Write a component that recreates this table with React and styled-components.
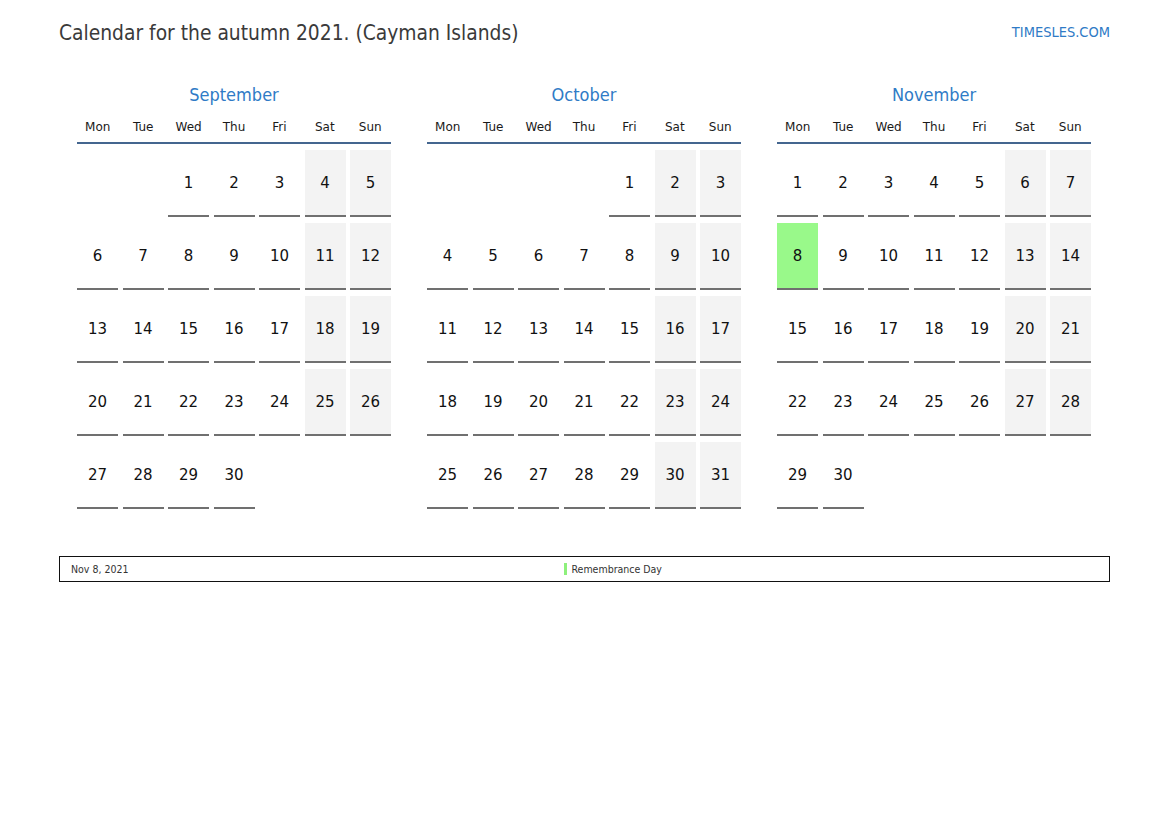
import React from 'react';
import styled, { createGlobalStyle } from 'styled-components';

const GlobalStyle = createGlobalStyle`
  html, body {
    margin: 0;
    padding: 0;
    background: #fff;
  }
  body {
    font-family: "DejaVu Sans", "Liberation Sans", sans-serif;
  }
`;

const condensed = `"DejaVu Sans Condensed", "DejaVu Sans", sans-serif`;

const months = [
  { name: 'September', offset: 2, days: 30 },
  { name: 'October', offset: 4, days: 31 },
  { name: 'November', offset: 0, days: 30, holidays: [8] },
];

const dayNames = ['Mon', 'Tue', 'Wed', 'Thu', 'Fri', 'Sat', 'Sun'];

export default function App() {
  return (
    <>
      <GlobalStyle />
      <Page>
        <Header>
          <Title>Calendar for the autumn 2021. (Cayman Islands)</Title>
          <Brand>TIMESLES.COM</Brand>
        </Header>

        <Months>
          {months.map((m) => (
            <Month key={m.name}>
              <MonthName>{m.name}</MonthName>
              <DayNames>
                {dayNames.map((d) => (
                  <DayName key={d}>{d}</DayName>
                ))}
              </DayNames>
              <Grid>
                {Array.from({ length: m.offset }).map((_, i) => (
                  <Empty key={'e' + i} />
                ))}
                {Array.from({ length: m.days }).map((_, i) => {
                  const day = i + 1;
                  const col = (m.offset + i) % 7;
                  const holiday = m.holidays && m.holidays.includes(day);
                  return (
                    <Day key={day} $weekend={col >= 5} $holiday={holiday}>
                      {day}
                    </Day>
                  );
                })}
              </Grid>
            </Month>
          ))}
        </Months>

        <Legend>
          <LegendDate>Nov 8, 2021</LegendDate>
          <LegendName>
            <Marker />
            Remembrance Day
          </LegendName>
        </Legend>
      </Page>
    </>
  );
}

const Page = styled.div`
  width: 1169px;
  height: 827px;
  box-sizing: border-box;
  padding: 20px 59px 0;
`;

const Header = styled.div`
  display: flex;
  justify-content: space-between;
  align-items: center;
  height: 26px;
`;

const Title = styled.div`
  font-family: ${condensed};
  font-size: 20.8px;
  color: #3a3a3a;
  line-height: 26px;
`;

const Brand = styled.div`
  font-family: ${condensed};
  font-size: 14.5px;
  color: #2f7bc6;
  line-height: 26px;
  margin-top: -2px;
`;

const Months = styled.div`
  display: grid;
  grid-template-columns: repeat(3, 1fr);
  column-gap: 36px;
  padding: 0 19px 0 18px;
  margin-top: 36px;
`;

const Month = styled.div`
  display: flex;
  flex-direction: column;
`;

const MonthName = styled.div`
  font-family: ${condensed};
  text-align: center;
  font-size: 18px;
  line-height: 26px;
  color: #2f7bc6;
`;

const DayNames = styled.div`
  display: grid;
  grid-template-columns: repeat(7, 1fr);
  column-gap: 4px;
  margin-top: 9px;
  padding-bottom: 5px;
  border-bottom: 2px solid #44668f;
`;

const DayName = styled.div`
  text-align: center;
  font-size: 12px;
  line-height: 20px;
  color: #1a1a1a;
`;

const Grid = styled.div`
  display: grid;
  grid-template-columns: repeat(7, 1fr);
  column-gap: 4.5px;
  row-gap: 6px;
  margin-top: 6px;
`;

const Empty = styled.div`
  height: 67px;
`;

const Day = styled.div`
  height: 67px;
  box-sizing: border-box;
  display: flex;
  align-items: center;
  justify-content: center;
  font-size: 15px;
  color: #111;
  border-bottom: 2px solid #707070;
  background: ${(p) => (p.$holiday ? '#99f98a' : p.$weekend ? '#f3f3f3' : '#fff')};
`;

const Legend = styled.div`
  display: grid;
  grid-template-columns: 48% 1fr;
  align-items: center;
  margin-top: 47px;
  height: 26px;
  box-sizing: border-box;
  border: 1px solid #111;
  font-family: ${condensed};
  font-size: 10.5px;
  color: #333;
`;

const LegendDate = styled.div`
  padding-left: 11px;
`;

const LegendName = styled.div`
  display: flex;
  align-items: center;
  gap: 5px;
`;

const Marker = styled.span`
  width: 3px;
  height: 12px;
  background: #8ef07c;
`;
